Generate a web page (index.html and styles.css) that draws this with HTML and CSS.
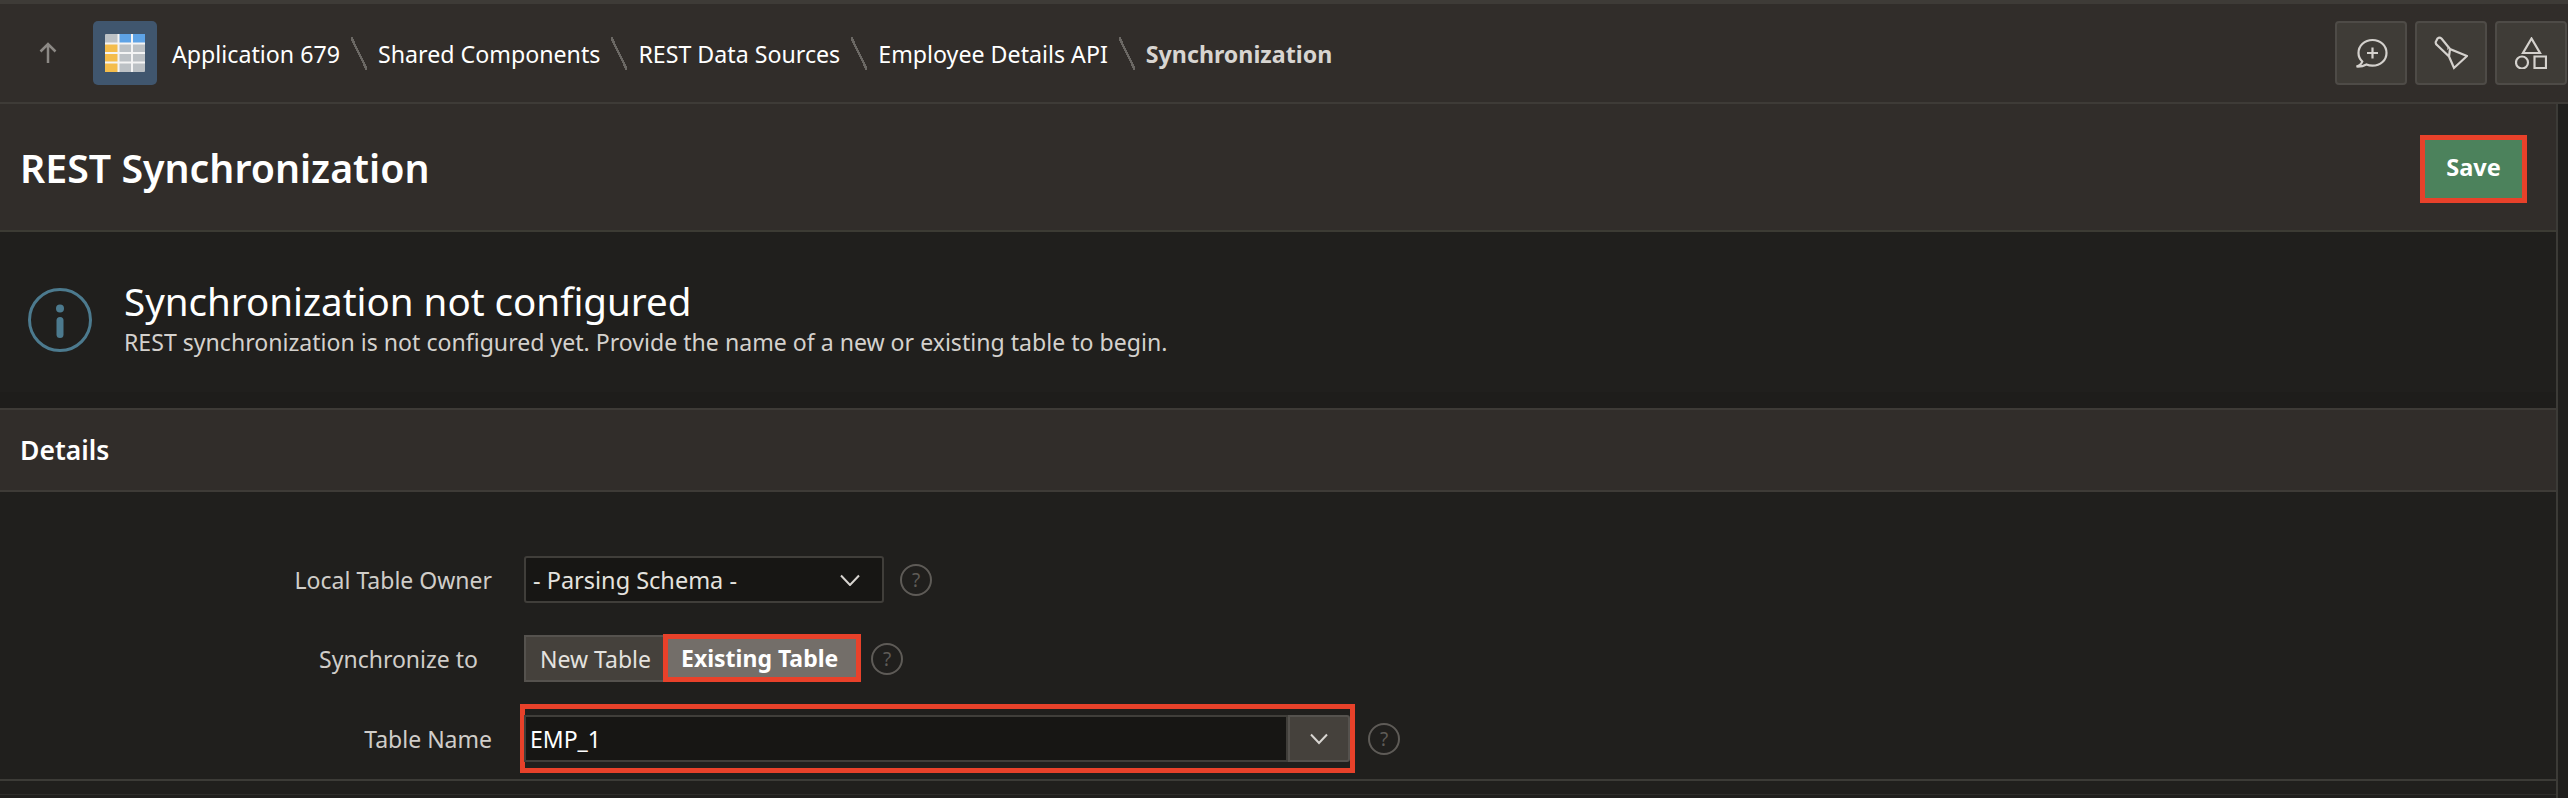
FILE: index.html
```html
<!DOCTYPE html>
<html lang="en">
<head>
<meta charset="utf-8">
<title>REST Synchronization</title>
<link rel="stylesheet" href="styles.css">
</head>
<body>
<header class="topbar">
  <svg class="up" viewBox="0 0 20 22" width="20" height="22"><path d="M10 21V2M2.500 9.500 10 2l7.500 7.500"/></svg>
  <div class="appicon">
    <svg viewBox="0 0 40 38" width="40" height="38">
      <rect width="40" height="38" rx="1" fill="#bcc1c5"/>
      <rect x="14" width="26" height="9" fill="#5ea3e6"/>
      <rect y="10" width="13" height="28" fill="#f4bd4c"/>
      <path d="M0 9.500h40M0 19h40M0 28.500h40M13.500 0v38M27 0v38" stroke="#f4f4f4" stroke-width="2" fill="none"/>
    </svg>
  </div>
  <nav class="crumbs">
    <span class="crumb">Application 679</span><i class="sep"></i>
    <span class="crumb">Shared Components</span><i class="sep"></i>
    <span class="crumb">REST Data Sources</span><i class="sep"></i>
    <span class="crumb">Employee Details API</span><i class="sep"></i>
    <span class="crumb current">Synchronization</span>
  </nav>
  <div class="tools">
    <button class="tool" type="button"><svg viewBox="-1.500 0 34 30" width="34" height="30"><path d="M1 28.500c3.500.2 7-.4 10-2 1.800.8 3.800 1.200 6 1.200 8 0 14-5.500 14-12.700S25 2 17 2 3 7.800 3 15c0 3.500 1.300 6.300 3.800 8.500-.6 2-2.300 3.800-5.800 5ZM17 9.500v11M11.500 15h11"/></svg></button>
    <button class="tool" type="button"><svg viewBox="0 0 34 34" width="34" height="34"><path d="M3 9 15 20.500 20 32 33 20 16 13 7.500 2.500a3 3 0 0 0-4 0l-1 2a3 3 0 0 0 .5 4.500ZM16 13l-1 7.500M13.200 12.800h.6"/></svg></button>
    <button class="tool" type="button"><svg viewBox="0 0 32 32" width="32" height="32"><path d="M16.500 1.500 8 16h17ZM19.500 19.500H31V31H19.500Z"/><circle cx="7" cy="25.500" r="6"/></svg></button>
  </div>
</header>

<div class="page">
  <main class="main">
    <section class="titlebar">
      <h1 class="pagetitle">REST Synchronization</h1>
      <button class="save" type="button">Save</button>
    </section>

    <section class="alert">
      <svg class="alerticon" viewBox="0 0 64 64" width="64" height="64">
        <circle cx="32" cy="32" r="30.500" fill="none" stroke="#4c7a8e" stroke-width="3"/>
        <circle cx="32" cy="20.500" r="4" fill="#4c7a8e"/>
        <rect x="28.500" y="29" width="7" height="21" rx="3.500" fill="#4c7a8e"/>
      </svg>
      <div class="alerttext">
        <h2 class="alerttitle">Synchronization not configured</h2>
        <p class="alertbody">REST synchronization is not configured yet. Provide the name of a new or existing table to begin.</p>
      </div>
    </section>

    <section class="regionhead"><h3 class="regiontitle">Details</h3></section>

    <section class="form">
      <div class="row row-owner">
        <label class="label">Local Table Owner</label>
        <div class="select">
          <span>- Parsing Schema -</span>
          <svg class="chev" viewBox="0 0 20 12" width="20" height="12"><path d="M1 1.500 10 11l9-9.500"/></svg>
        </div>
        <span class="help">?</span>
      </div>
      <div class="row row-sync">
        <label class="label label-sync">Synchronize to</label>
        <div class="radios">
          <span class="radio">New Table</span>
          <span class="radio active">Existing Table</span>
        </div>
        <span class="help help-sync">?</span>
      </div>
      <div class="row row-name">
        <label class="label">Table Name</label>
        <div class="combomark">
          <div class="combo">
            <span class="comboinput">EMP_1</span>
            <span class="combobtn"><svg class="chev" viewBox="0 0 18 12" width="18" height="12"><path d="M1 1.500 9 10l8-8.500"/></svg></span>
          </div>
        </div>
        <span class="help help-name">?</span>
      </div>
    </section>
    <div class="endline"></div>
  </main>
  <aside class="scrollstrip"></aside>
</div>
</body>
</html>
```
FILE: styles.css
```css
* { box-sizing: border-box; }
html, body { margin: 0; height: 100%; }
body {
  width: 2568px;
  height: 798px;
  overflow: hidden;
  background: #201f1d;
  color: #fff;
  font-family: "Noto Sans", "Open Sans", sans-serif;
  display: flex;
  flex-direction: column;
}
h1, h2, h3, p { margin: 0; font-weight: 400; }

.topbar {
  height: 104px;
  flex: none;
  display: flex;
  align-items: center;
  background: #312d2a;
  border-top: 4px solid #3e3b37;
  border-bottom: 2px solid #3e3b37;
  padding: 0 1px 0 38px;
}
.up { fill: none; stroke: #8c8985; stroke-width: 2.500; margin-right: 35px; }
.appicon {
  width: 64px;
  height: 64px;
  flex: none;
  background: #40566e;
  border-radius: 5px;
  display: flex;
  align-items: center;
  justify-content: center;
}
.crumbs { display: flex; align-items: center; margin-left: 15px; flex: 1; }
.crumb { font-size: 23.200px; line-height: 34px; padding-top: 2px; color: #fff; white-space: nowrap; }
.current { font-weight: 700; color: #d8d5d1; font-size: 23.200px; }
.sep {
  width: 16px;
  height: 33px;
  margin: 0 11px;
  flex: none;
  background: linear-gradient(to top right, transparent calc(50% - 1.200px), #6b6864 calc(50% - 1.200px), #6b6864 calc(50% + 1.200px), transparent calc(50% + 1.200px));
}
.tools { display: flex; gap: 8px; }
.tool {
  width: 72px;
  height: 64px;
  padding: 0;
  background: #3f3c37;
  border: 2px solid #4e4b47;
  border-radius: 4px;
  display: flex;
  align-items: center;
  justify-content: center;
}
.tool svg { fill: none; stroke: #d4d1cd; stroke-width: 2.200; }

.page { flex: 1; display: flex; min-height: 0; }
.main { flex: 1; min-width: 0; display: flex; flex-direction: column; }
.scrollstrip { width: 12px; flex: none; background: #201f1d; border-left: 2px solid #3c3b37; }

.titlebar {
  height: 128px;
  flex: none;
  display: flex;
  align-items: center;
  justify-content: space-between;
  background: #312d2a;
  border-bottom: 2px solid #3c3b34;
  padding: 0 29px 0 20px;
}
.pagetitle { font-size: 39.300px; line-height: 52px; font-weight: 600; margin-top: 2px; }
.save {
  width: 107px;
  height: 68px;
  margin-top: 3px;
  background: #4c825c;
  border: 5px solid #e8412a;
  color: #fff;
  font: 700 23.500px "Noto Sans", sans-serif;
  padding: 0 0 3px;
}

.alert {
  height: 176px;
  flex: none;
  display: flex;
  align-items: center;
  padding: 0 0 0 28px;
  background: linear-gradient(#201f1d 160px, #1e1d1b 160px);
}
.alerttext { margin-left: 32px; margin-top: -3px; }
.alerttitle { font-size: 38.500px; line-height: 48px; }
.alertbody { font-size: 23.100px; line-height: 35px; color: #d4d1cd; }

.regionhead {
  height: 84px;
  flex: none;
  display: flex;
  align-items: center;
  background: #312d2a;
  border-top: 2px solid #3e3b37;
  border-bottom: 2px solid #3e3b37;
  padding-left: 20px;
}
.regiontitle { font-size: 26.500px; line-height: 36px; font-weight: 600; }

.form { padding-top: 64px; flex: none; }
.row { display: flex; align-items: center; }
.row-sync { margin-top: 32px; }
.row-name { margin-top: 22px; }
.label {
  width: 492px;
  flex: none;
  text-align: right;
  font-size: 23px;
  color: #d0cdc9;
}
.label-sync { padding-right: 14px; }
.select {
  width: 360px;
  height: 47px;
  margin-left: 32px;
  padding: 0 22px 0 7px;
  display: flex;
  align-items: center;
  justify-content: space-between;
  background: #171614;
  border: 2px solid #403e3a;
  border-radius: 3px;
  font-size: 23.500px;
  color: #e4e2df;
}
.chev { fill: none; stroke: #d8d5d1; stroke-width: 2; }
.help {
  width: 32px;
  height: 32px;
  flex: none;
  margin-left: 16px;
  border: 2px solid #5e5b57;
  border-radius: 50%;
  display: flex;
  align-items: center;
  justify-content: center;
  color: #5e5b57;
  font-size: 19px;
}
.radios {
  height: 47px;
  margin-left: 32px;
  display: flex;
  align-items: stretch;
  background: #45413c;
  border: 2px solid #55524e;
  border-right: 0;
}
.radio {
  display: flex;
  align-items: center;
  padding: 0 0 0 14px;
  width: 137px;
  font-size: 23px;
  color: #e4e2df;
  white-space: nowrap;
}
.active {
  width: 198px;
  margin: -3px 0 -2px 0;
  padding: 0 0 0 13px;
  background: #736e69;
  border: 5px solid #e8412a;
  font-weight: 700;
  color: #fff;
}
.help-sync { margin-left: 10px; }
.combomark {
  width: 835px;
  height: 69px;
  flex: none;
  margin-left: 28px;
  border: 5px solid #e8412a;
  padding: 6px 0;
}
.combo { height: 47px; margin-left: -1px; display: flex; }
.comboinput {
  flex: 1;
  display: flex;
  align-items: center;
  padding-left: 4px;
  background: #171614;
  border: 2px solid #403e3a;
  font-size: 23px;
  color: #fff;
}
.combobtn {
  width: 62px;
  flex: none;
  display: flex;
  align-items: center;
  justify-content: center;
  background: #45413c;
  border: 2px solid #55524e;
  border-radius: 0 3px 3px 0;
}
.help-name { margin-left: 13px; }
.endline {
  margin-top: 6px;
  height: 16px;
  flex: none;
  border-top: 2px solid #3c3b37;
  border-bottom: 1px solid #2e2d2a;
}
```
